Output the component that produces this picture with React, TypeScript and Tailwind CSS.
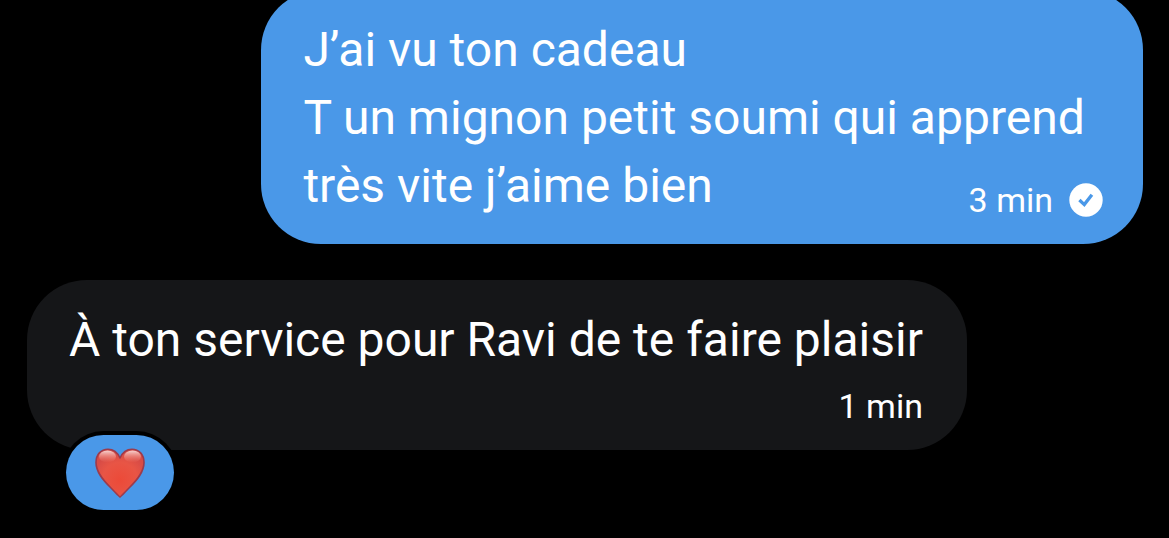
type messageProps = {
  id: number;
  lines: string[];
  time: string;
  sent?: boolean;
  liked?: boolean;
};

const messages: messageProps[] = [
  {
    id: 1,
    lines: ["J’ai vu ton cadeau", "T un mignon petit soumi qui apprend très vite j’aime bien"],
    time: "3 min",
    sent: true,
  },
  {
    id: 2,
    lines: ["À ton service pour Ravi de te faire plaisir"],
    time: "1 min",
    liked: true,
  },
];

function SentIcon() {
  return (
    <svg viewBox="0 0 34 34" className="size-[34px]" role="img" aria-label="Envoyé">
      <circle cx="17" cy="17" r="16.7" fill="#fff" />
      <path d="M10.4 17l4.900 4.600 7.600-9.900" fill="none" stroke="#4a98e8" strokeWidth="3.3" />
    </svg>
  );
}

function HeartIcon() {
  return (
    <svg viewBox="0 0 50 50" className="size-[50px]" aria-hidden="true">
      <defs>
        <radialGradient id="heart" cx="25" cy="32" r="27" gradientUnits="userSpaceOnUse">
          <stop offset="0" stopColor="#ec4a38" />
          <stop offset="0.65" stopColor="#e85545" />
          <stop offset="1" stopColor="#d84c46" />
        </radialGradient>
        <linearGradient id="shine" x1="0" y1="0" x2="0" y2="1">
          <stop offset="0" stopColor="#fff" stopOpacity="0.75" />
          <stop offset="0.5" stopColor="#ffc4ba" stopOpacity="0.4" />
          <stop offset="1" stopColor="#ff9a88" stopOpacity="0" />
        </linearGradient>
      </defs>
      <path
        d="M25 49C23.500 48 20 44 15.500 39.500C8 32 1 24 1 14.500C1 6.500 6 1.200 13 1.200C19 1.200 22.800 5 25 10C27.200 5 31 1.200 37 1.200C44 1.200 49 6.500 49 14.500C49 24 42 32 34.500 39.500C30 44 26.500 48 25 49Z"
        fill="url(#heart)"
        stroke="#9c3b4c"
        strokeWidth="1.6"
        strokeLinejoin="round"
      />
      <ellipse cx="12.500" cy="8.500" rx="8.500" ry="6" fill="url(#shine)" />
      <ellipse cx="37.500" cy="8.500" rx="8.500" ry="6" fill="url(#shine)" />
    </svg>
  );
}

function Message({ message }: { message: messageProps }) {
  if (message.sent)
    return (
      <li className="flow-root max-w-[79%] self-end rounded-[60px] bg-[#4a98e8] pt-[26px] pr-10 pb-6 pl-[42px]">
        {message.lines.map((line, index) => (
          <div key={line}>
            <span>{line}</span>
            {index === message.lines.length - 1 && (
              <div className="float-right mt-7 flex items-center gap-4 text-[34px] leading-10">
                <time>{message.time}</time>
                <SentIcon />
              </div>
            )}
          </div>
        ))}
      </li>
    );

  return (
    <li className="relative max-w-[86%] self-start rounded-[60px] bg-[#151618] pt-[26px] pr-11 pb-6 pl-[42px]">
      {message.lines.map((line) => (
        <p key={line}>{line}</p>
      ))}
      <time className="mt-3 block text-right text-[34px] leading-10">{message.time}</time>
      {message.liked && (
        <button
          type="button"
          aria-label="J’aime"
          className="absolute -bottom-[60px] left-[39px] flex h-[75px] w-[108px] items-center justify-center rounded-full bg-[#4a98e8] ring-4 ring-black">
          <HeartIcon />
        </button>
      )}
    </li>
  );
}

export default function App() {
  return (
    <main className="flex h-screen flex-col justify-end overflow-hidden bg-black pr-[26px] pb-[88px] pl-[27px] font-[Roboto,sans-serif] text-[48px] leading-[68px] text-white">
      <ul className="flex flex-col gap-9">
        {messages.map((message) => (
          <Message key={message.id} message={message} />
        ))}
      </ul>
    </main>
  );
}
